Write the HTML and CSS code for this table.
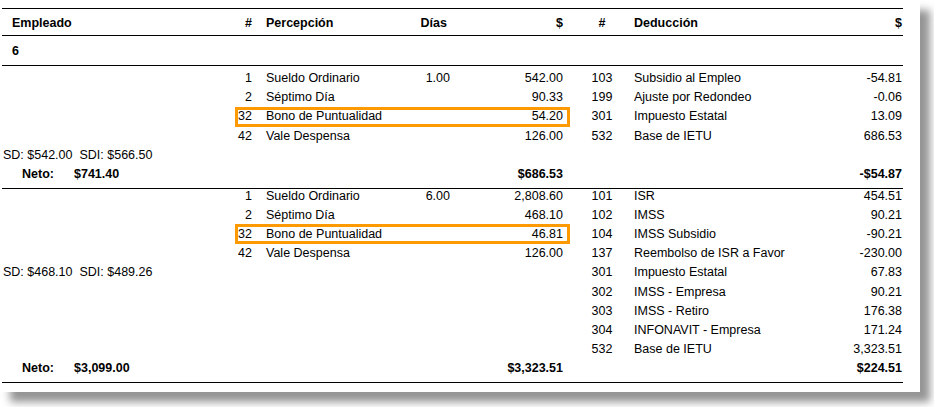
FILE: index.html
```html
<!DOCTYPE html>
<html lang="es">
<head>
<meta charset="utf-8">
<title>Nómina</title>
<link rel="stylesheet" href="styles.css">
</head>
<body>
<div class="paper">
  <div class="report">
    <div class="row head">
      <div class="emp">Empleado</div>
      <div class="perc"><span class="num">#</span><span class="name">Percepción</span><span class="dias dias-h">Días</span><span class="amt">$</span></div>
      <div class="ded"><span class="dnum">#</span><span class="name">Deducción</span><span class="amt">$</span></div>
    </div>
    <div class="row group"><div class="emp">6</div><div class="perc"></div><div class="ded"></div></div>

    <div class="block first">
      <div class="row">
        <div class="emp"></div>
        <div class="perc"><span class="num">1</span><span class="name">Sueldo Ordinario</span><span class="dias">1.00</span><span class="amt">542.00</span></div>
        <div class="ded"><span class="dnum">103</span><span class="name">Subsidio al Empleo</span><span class="amt">-54.81</span></div>
      </div>
      <div class="row">
        <div class="emp"></div>
        <div class="perc"><span class="num">2</span><span class="name">Séptimo Día</span><span class="dias"></span><span class="amt">90.33</span></div>
        <div class="ded"><span class="dnum">199</span><span class="name">Ajuste por Redondeo</span><span class="amt">-0.06</span></div>
      </div>
      <div class="row">
        <div class="emp"></div>
        <div class="perc hl"><span class="num">32</span><span class="name">Bono de Puntualidad</span><span class="dias"></span><span class="amt">54.20</span></div>
        <div class="ded"><span class="dnum">301</span><span class="name">Impuesto Estatal</span><span class="amt">13.09</span></div>
      </div>
      <div class="row">
        <div class="emp"></div>
        <div class="perc"><span class="num">42</span><span class="name">Vale Despensa</span><span class="dias"></span><span class="amt">126.00</span></div>
        <div class="ded"><span class="dnum">532</span><span class="name">Base de IETU</span><span class="amt">686.53</span></div>
      </div>
      <div class="row">
        <div class="emp sd">SD: $542.00&nbsp; SDI: $566.50</div>
        <div class="perc"></div>
        <div class="ded"></div>
      </div>
      <div class="row total">
        <div class="emp"><span class="neto">Neto:</span><span>$741.40</span></div>
        <div class="perc"><span class="num"></span><span class="name"></span><span class="dias"></span><span class="amt">$686.53</span></div>
        <div class="ded"><span class="dnum"></span><span class="name"></span><span class="amt">-$54.87</span></div>
      </div>
    </div>

    <div class="block second">
      <div class="row">
        <div class="emp"></div>
        <div class="perc"><span class="num">1</span><span class="name">Sueldo Ordinario</span><span class="dias">6.00</span><span class="amt">2,808.60</span></div>
        <div class="ded"><span class="dnum">101</span><span class="name">ISR</span><span class="amt">454.51</span></div>
      </div>
      <div class="row">
        <div class="emp"></div>
        <div class="perc"><span class="num">2</span><span class="name">Séptimo Día</span><span class="dias"></span><span class="amt">468.10</span></div>
        <div class="ded"><span class="dnum">102</span><span class="name">IMSS</span><span class="amt">90.21</span></div>
      </div>
      <div class="row">
        <div class="emp"></div>
        <div class="perc hl"><span class="num">32</span><span class="name">Bono de Puntualidad</span><span class="dias"></span><span class="amt">46.81</span></div>
        <div class="ded"><span class="dnum">104</span><span class="name">IMSS Subsidio</span><span class="amt">-90.21</span></div>
      </div>
      <div class="row">
        <div class="emp"></div>
        <div class="perc"><span class="num">42</span><span class="name">Vale Despensa</span><span class="dias"></span><span class="amt">126.00</span></div>
        <div class="ded"><span class="dnum">137</span><span class="name">Reembolso de ISR a Favor</span><span class="amt">-230.00</span></div>
      </div>
      <div class="row">
        <div class="emp sd">SD: $468.10&nbsp; SDI: $489.26</div>
        <div class="perc"></div>
        <div class="ded"><span class="dnum">301</span><span class="name">Impuesto Estatal</span><span class="amt">67.83</span></div>
      </div>
      <div class="row">
        <div class="emp"></div>
        <div class="perc"></div>
        <div class="ded"><span class="dnum">302</span><span class="name">IMSS - Empresa</span><span class="amt">90.21</span></div>
      </div>
      <div class="row">
        <div class="emp"></div>
        <div class="perc"></div>
        <div class="ded"><span class="dnum">303</span><span class="name">IMSS - Retiro</span><span class="amt">176.38</span></div>
      </div>
      <div class="row">
        <div class="emp"></div>
        <div class="perc"></div>
        <div class="ded"><span class="dnum">304</span><span class="name">INFONAVIT - Empresa</span><span class="amt">171.24</span></div>
      </div>
      <div class="row">
        <div class="emp"></div>
        <div class="perc"></div>
        <div class="ded"><span class="dnum">532</span><span class="name">Base de IETU</span><span class="amt">3,323.51</span></div>
      </div>
      <div class="row total">
        <div class="emp"><span class="neto">Neto:</span><span>$3,099.00</span></div>
        <div class="perc"><span class="num"></span><span class="name"></span><span class="dias"></span><span class="amt">$3,323.51</span></div>
        <div class="ded"><span class="dnum"></span><span class="name"></span><span class="amt">$224.51</span></div>
      </div>
    </div>
  </div>
</div>
</body>
</html>
```
FILE: styles.css
```css
html, body {
  margin: 0;
  padding: 0;
  background: #ffffff;
}

body {
  font-family: "Liberation Sans", Arial, sans-serif;
  font-size: 12.5px;
  color: #000;
  width: 934px;
  height: 407px;
  overflow: hidden;
}

.paper {
  width: 920px;
  height: 392px;
  background: #fff;
  box-shadow: 10px 10px 8px rgba(0, 0, 0, 0.42);
  padding-top: 8px;
  box-sizing: border-box;
}

.report {
  margin-left: 2px;
  width: 901px;
}

.row {
  display: grid;
  grid-template-columns: 233px 335px 333px;
  height: 19.2px;
  line-height: 15px;
  white-space: nowrap;
}

.perc {
  display: grid;
  grid-template-columns: 17px 148px 50px 120px;
  position: relative;
}

.ded {
  display: grid;
  grid-template-columns: 64px 186px 83px;
}

.num { text-align: right; }
.perc .name { padding-left: 14px; }
.dias { text-align: right; }
.perc .amt { text-align: right; padding-right: 7px; }
.dnum { text-align: center; }
.ded .amt { text-align: right; padding-right: 1px; }

.head {
  height: 28px;
  box-sizing: border-box;
  padding-top: 7px;
  border-top: 1px solid #000;
  border-bottom: 1px solid #000;
  font-weight: bold;
}

.head .emp { padding-left: 10px; }
.head .dias-h { padding-right: 3px; }

.group {
  height: 30px;
  box-sizing: border-box;
  padding-top: 8px;
  border-bottom: 1px solid #000;
  font-weight: bold;
}

.group .emp { padding-left: 10px; }

.block {
  border-bottom: 1px solid #000;
}

.block.first {
  padding-top: 5px;
  padding-bottom: 1.5px;
}

.block.second {
  padding-bottom: 1.7px;
}

.sd { padding-left: 1px; }

.total { font-weight: bold; }

.neto {
  display: inline-block;
  width: 52px;
  margin-left: 20px;
}

.hl::after {
  content: "";
  position: absolute;
  left: 0;
  right: 0;
  top: -2.7px;
  bottom: 1.9px;
  border: 3px solid #ff9900;
  pointer-events: none;
}
```
